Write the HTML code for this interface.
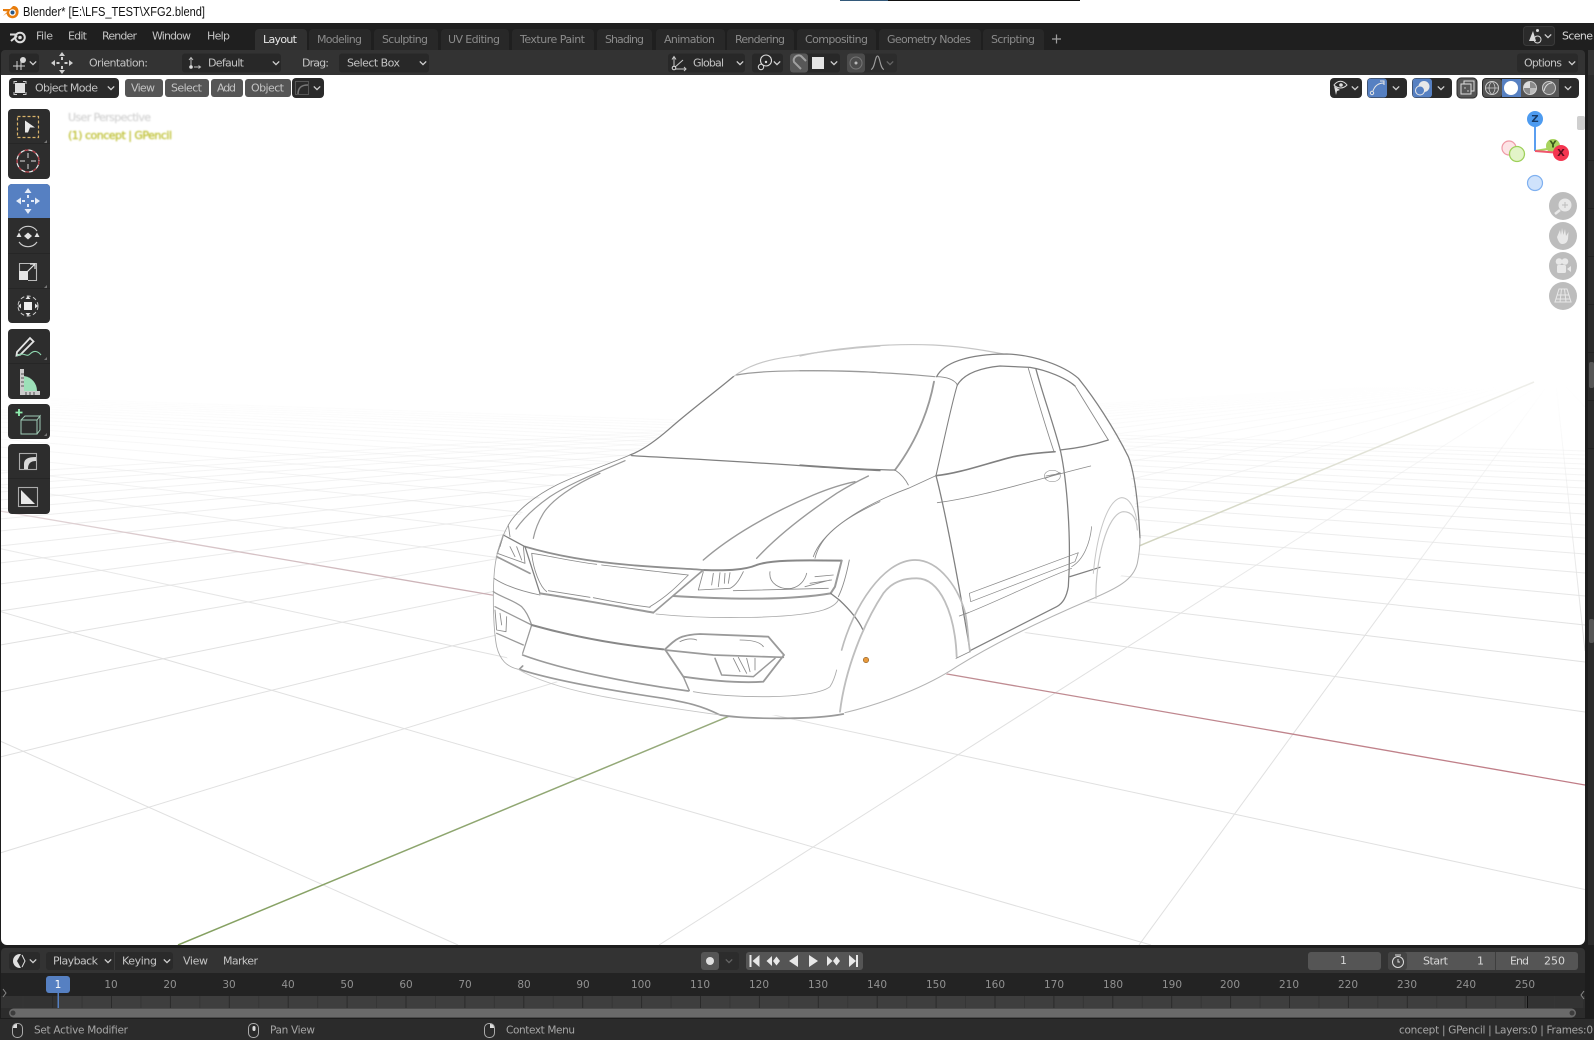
<!DOCTYPE html>
<html><head><meta charset="utf-8"><title>Blender</title>
<style>
html,body{margin:0;padding:0;background:#1d1d1d;width:1594px;height:1040px;overflow:hidden}
svg{display:block;overflow:hidden}
text{font-family:"DejaVu Sans","Liberation Sans",sans-serif;font-size:11px;fill:#c4c4c4;dominant-baseline:central}
.tab{fill:#8b8b8b}
.num{fill:#919191;text-anchor:middle;font-size:10.5px}
.w{fill:#d8d8d8}
.st{fill:#a6a6a6;font-size:10.5px}
.chev{fill:none;stroke:#cfcfcf;stroke-width:1.3}
.car path{fill:none;stroke-linecap:round;stroke-linejoin:round}
.d{stroke:#808080;stroke-width:3.8}
.m{stroke:#9a9a9a;stroke-width:4.2}
.f{stroke:#8a8a8a;stroke-width:2.6}
.l{stroke:#c6c6c6;stroke-width:3.5}
.g{stroke:#aaa;stroke-width:2.6}
</style></head><body>
<svg width="1594" height="1040" viewBox="0 0 1594 1040" xmlns="http://www.w3.org/2000/svg">
<defs>
<path id="c" class="chev" d="M-3.2 -1.6L0 1.6L3.2 -1.6"/>
<linearGradient id="gr" gradientUnits="userSpaceOnUse" x1="0" y1="385" x2="0" y2="640"><stop offset="0" stop-color="#e6e6e6" stop-opacity="0"/><stop offset=".45" stop-color="#e4e4e4" stop-opacity=".55"/><stop offset="1" stop-color="#e0e0e0"/></linearGradient>
<linearGradient id="rx" gradientUnits="userSpaceOnUse" x1="0" y1="0" x2="1585" y2="0"><stop offset="0" stop-color="#e2d6d8"/><stop offset=".31" stop-color="#c9aeb3"/><stop offset=".6" stop-color="#bf8d93"/><stop offset="1" stop-color="#c07c86"/></linearGradient>
<linearGradient id="gx" gradientUnits="userSpaceOnUse" x1="0" y1="945" x2="0" y2="382"><stop offset="0" stop-color="#84a060"/><stop offset=".41" stop-color="#98ab7e"/><stop offset=".7" stop-color="#cfd2bc"/><stop offset="1" stop-color="#eeeeea"/></linearGradient>
<pattern id="tk" patternUnits="userSpaceOnUse" x="111" y="996" width="58.9" height="14"><rect width="58.9" height="14" fill="none"/><path d="M0.5 0V14" stroke="#2a2a2a"/><path d="M29.95 0V14" stroke="#353535"/></pattern>
<clipPath id="vp"><path d="M1 75H1585V939a6 6 0 0 1-6 6H7a6 6 0 0 1-6-6Z"/></clipPath>
</defs>

<!-- title bar -->
<rect width="1594" height="23" fill="#fff"/>
<rect x="840" y="0" width="48" height="1" fill="#33597a"/><rect x="888" y="0" width="192" height="1" fill="#111"/>
<g transform="translate(11,12)"><path d="M-8 -3H-1L2 -6C6 -6.500 8 -3 7.500 1C7 5 3 7 0 6C-3 5.500 -4 3 -4.500 1.500L-8 4L-3.500 -0.500L-8 -1Z" fill="#e87d0d"/><circle cx="1.500" cy="0.500" r="3.300" fill="#fff"/><circle cx="1.500" cy="0.500" r="2" fill="#265787"/></g>
<text x="23" y="12" textLength="182" lengthAdjust="spacingAndGlyphs" style="font-family:'Liberation Sans',sans-serif;font-size:12.5px;fill:#111">Blender* [E:\LFS_TEST\XFG2.blend]</text>

<!-- top bar -->
<rect y="23" width="1594" height="27" fill="#1f1f1f"/>
<circle cx="20" cy="37.500" r="4.800" fill="none" stroke="#dcdcdc" stroke-width="2"/><circle cx="20" cy="37.500" r="1.800" fill="#dcdcdc"/>
<path d="M10 34.500H17.500M11 41L17 36" fill="none" stroke="#dcdcdc" stroke-width="2"/>
<text x="36" y="36" textLength="17">File</text><text x="68" y="36" textLength="19">Edit</text><text x="102" y="36" textLength="35">Render</text><text x="152" y="36" textLength="39">Window</text><text x="207" y="36" textLength="23">Help</text>
<path d="M255 50V33a4 4 0 0 1 4-4h44a4 4 0 0 1 4 4V50Z" fill="#303030"/>
<g fill="#282828">
<path d="M309 50V33a4 4 0 0 1 4-4h54a4 4 0 0 1 4 4V50Z"/><path d="M374 50V33a4 4 0 0 1 4-4h56a4 4 0 0 1 4 4V50Z"/><path d="M441 50V33a4 4 0 0 1 4-4h60a4 4 0 0 1 4 4V50Z"/><path d="M512 50V33a4 4 0 0 1 4-4h74a4 4 0 0 1 4 4V50Z"/><path d="M597 50V33a4 4 0 0 1 4-4h47a4 4 0 0 1 4 4V50Z"/><path d="M656 50V33a4 4 0 0 1 4-4h61a4 4 0 0 1 4 4V50Z"/><path d="M727 50V33a4 4 0 0 1 4-4h59a4 4 0 0 1 4 4V50Z"/><path d="M797 50V33a4 4 0 0 1 4-4h71a4 4 0 0 1 4 4V50Z"/><path d="M879 50V33a4 4 0 0 1 4-4h94a4 4 0 0 1 4 4V50Z"/><path d="M983 50V33a4 4 0 0 1 4-4h53a4 4 0 0 1 4 4V50Z"/>
</g>
<text x="263" y="39.500" textLength="34" style="fill:#e6e6e6">Layout</text>
<text class="tab" x="317" y="39.500" textLength="45">Modeling</text><text class="tab" x="382" y="39.500" textLength="46">Sculpting</text><text class="tab" x="448" y="39.500" textLength="52">UV Editing</text><text class="tab" x="520" y="39.500" textLength="65">Texture Paint</text><text class="tab" x="605" y="39.500" textLength="39">Shading</text><text class="tab" x="664" y="39.500" textLength="51">Animation</text><text class="tab" x="735" y="39.500" textLength="50">Rendering</text><text class="tab" x="805" y="39.500" textLength="63">Compositing</text><text class="tab" x="887" y="39.500" textLength="84">Geometry Nodes</text><text class="tab" x="991" y="39.500" textLength="44">Scripting</text>
<path d="M1052 39H1061M1056.500 34.500V43.500" stroke="#a0a0a0" stroke-width="1.200" fill="none"/>
<rect x="1523.500" y="26.500" width="31" height="19" rx="3" fill="#2a2a2a" stroke="#3a3a3a"/><path d="M1529 41L1533 31L1536 41Z" fill="#d8d8d8"/><circle cx="1537.500" cy="30.500" r="1.500" fill="#d8d8d8"/><circle cx="1537.500" cy="39.500" r="3.500" fill="none" stroke="#d8d8d8"/>
<use href="#c" x="1548" y="36"/>
<rect x="1555" y="26" width="39" height="20" fill="#1f1f1f"/>
<text x="1562" y="36" textLength="31" class="w">Scene</text>

<!-- tool settings -->
<path d="M1 75V54a4 4 0 0 1 4-4H1581a4 4 0 0 1 4 4V75Z" fill="#333"/>
<rect x="9" y="53.500" width="30" height="19" rx="3" fill="#282828"/>
<path d="M13 66H25M17 61V70M21 61V70" stroke="#d0d0d0" fill="none"/><circle cx="23" cy="60" r="3" fill="#d8d8d8"/><use href="#c" x="33" y="63"/>
<g fill="#cfcfcf"><path d="M62 52l3 4h-6zM62 74l3-4h-6zM51 63l4-3v6zM73 63l-4-3v6z"/><rect x="56.500" y="62" width="3" height="2"/><rect x="64.500" y="62" width="3" height="2"/><rect x="61" y="57" width="2" height="3"/><rect x="61" y="66" width="2" height="3"/></g>
<text x="89" y="63" textLength="59">Orientation:</text>
<rect x="182" y="53.500" width="99" height="19" rx="3" fill="#282828"/>
<path d="M191 66V58M189 60l2-2.500l2 2.500M194 67H200M198.500 65.500l2 1.500l-2 1.500" stroke="#bdbdbd" fill="none"/><circle cx="191" cy="67" r="1.800" fill="#e0e0e0"/>
<text x="208" y="63" textLength="36">Default</text><use href="#c" x="276" y="63"/>
<text x="302" y="63" textLength="27">Drag:</text>
<rect x="339" y="53.500" width="90" height="19" rx="3" fill="#282828"/><text x="347" y="63" textLength="53">Select Box</text><use href="#c" x="423" y="63"/>
<rect x="668" y="53.500" width="77" height="19" rx="3" fill="#282828"/>
<path d="M674 68V57M672 59.500l2-3l2 3M674 69H686M684 67l2 2l-2 2M674 68L683 60" stroke="#c8c8c8" fill="none"/><circle cx="674" cy="68" r="1.800" fill="#282828" stroke="#e0e0e0"/>
<text x="693" y="63" textLength="31">Global</text><use href="#c" x="740" y="63"/>
<rect x="752" y="53.500" width="31" height="19" rx="3" fill="#282828"/>
<circle cx="766" cy="60.500" r="5.500" fill="none" stroke="#dcdcdc" stroke-width="1.100"/><circle cx="761" cy="67" r="2.700" fill="#282828" stroke="#dcdcdc"/><circle cx="766" cy="62" r="1.200" fill="#dcdcdc"/><use href="#c" x="777" y="63"/>
<rect x="790" y="53.500" width="50" height="19" rx="3" fill="#282828"/><rect x="790" y="53.500" width="18" height="19" rx="3" fill="#585858"/>
<path d="M801 69L794 62A5 5 0 0 1 801 56L806 61" fill="none" stroke="#a0a0a0" stroke-width="2"/><path d="M802 66L797 61A2 2 0 0 1 800 59L804 64" fill="none" stroke="#585858" stroke-width=".8"/>
<rect x="812" y="57" width="12" height="12" fill="#e4e4e4"/><use href="#c" x="834" y="63"/>
<rect x="847" y="53.500" width="50" height="19" rx="3" fill="#2c2c2c"/><rect x="847" y="53.500" width="18" height="19" rx="3" fill="#4c4c4c"/>
<circle cx="856" cy="63" r="6" fill="none" stroke="#777"/><circle cx="856" cy="63" r="1.500" fill="#bbb"/>
<path d="M871 69.500C875 68.500 875 56 877.500 56C880 56 880 68.500 884 69.500" fill="none" stroke="#a0a0a0" stroke-width="1.100"/><use href="#c" x="890" y="63" opacity=".35"/>
<rect x="1517" y="53.500" width="61" height="19" rx="3" fill="#2a2a2a"/><text x="1524" y="63" textLength="38">Options</text><use href="#c" x="1572" y="63"/>

<!-- right sliver -->
<rect x="1588" y="50" width="6" height="895" fill="#2b2b2b"/>
<rect x="1588" y="50" width="6" height="25" fill="#333"/>
<g fill="#222"><rect x="1588" y="160" width="6" height="1"/><rect x="1588" y="208" width="6" height="1"/><rect x="1588" y="256" width="6" height="1"/><rect x="1588" y="304" width="6" height="1"/><rect x="1588" y="352" width="6" height="1"/><rect x="1588" y="400" width="6" height="1"/><rect x="1588" y="448" width="6" height="1"/></g>
<rect x="1589" y="362" width="5" height="26" rx="2" fill="#555"/><rect x="1589" y="619" width="5" height="24" rx="2" fill="#555"/>

<!-- viewport -->
<path d="M1 75H1585V939a6 6 0 0 1-6 6H7a6 6 0 0 1-6-6Z" fill="#fff"/>
<g clip-path="url(#vp)">
<g fill="none" stroke="url(#gr)" stroke-width="1">
<path d="M0 741L458 945M0 611.500L1151 945M0 548.600L1585 889.500M0 487L1585 712M0 470L1585 662M0 457L1585 625M0 447L1585 596M0 439L1585 573M0 432L1585 554M0 427L1585 538M0 422L1585 525M0 418L1585 514M0 415L1585 504M0 412L1585 495M0 409.500L1585 488M0 407L1585 481M0 405L1585 475M0 403L1585 469M0 401.500L1585 464M0 400L1585 459M0 398.600L1585 455M0 397L1585 451"/>
<path d="M0 853L1555 375M0 757L1555 375M0 692L1555 375M0 645L1555 375M0 611L1555 375M0 584L1555 375M0 563L1555 375M0 546L1555 375M0 531L1555 375M0 519L1555 375M0 509L1555 375M0 500L1555 375M0 492L1555 375M0 485L1555 375M0 479L1555 375M0 473L1555 375M659 945L1555 375M1139 945L1555 375M1555 375L1585 651M1555 375L1585 407"/>
</g>
<path d="M0 511L492 595M492 595L947 674L1585 785" stroke="url(#rx)" stroke-width="1.300" fill="none"/>
<path d="M178 945L1534 382" stroke="url(#gx)" stroke-width="1.500" fill="none"/>
</g>

<!-- car -->
<path fill="#fff" d="M733 377L790 357L900 344L1000 352L1078 378L1128 457L1140 538L1137 563L1093 598L957 667L927 687L883 703L845 714L720 716L613 700L518 669L497 647L493 597L508 525L560 480L630 455L670 430Z"/>
<g class="car">
<g transform="translate(480,330) scale(.33333)">
<path class="l" d="M760 140C800 110 850 90 930 80C1000 68 1100 55 1200 48"/>
<path class="m" d="M770 135C820 125 900 122 1000 122C1080 122 1150 124 1200 128" style="stroke-width:3.600"/>
<path class="d" d="M760 140C700 190 620 250 570 295C530 330 490 360 450 375"/>
<path class="f" d="M450 375C380 405 290 435 230 465C170 495 110 540 85 585"/>
<path class="m" d="M435 392C360 425 270 460 210 500C160 535 130 565 108 597" style="stroke-width:3.600"/>
<path class="m" d="M360 430C280 465 215 510 190 550C175 575 165 600 160 625" style="stroke-width:3.600"/>
<path class="d" d="M455 377C600 385 800 395 1000 410C1080 415 1150 420 1200 422"/>
<path class="m" d="M670 690C750 620 870 550 1000 495C1060 470 1100 460 1125 455"/>
<path class="m" d="M830 685C890 620 980 550 1070 490C1110 465 1140 450 1165 438"/>
<path class="f" d="M1005 685C1020 620 1080 570 1200 515"/>
<path class="m" d="M135 650C220 675 330 695 450 705C560 715 620 715 670 720" style="stroke-width:5.500;stroke:#8f8f8f"/>
<path class="m" d="M670 720C730 722 790 722 830 705C870 690 950 690 1085 692" style="stroke-width:6;stroke:#888"/>
<path class="m" d="M1085 692L1065 770L1052 790" style="stroke-width:6"/>
<path class="m" d="M580 798C700 805 900 815 1052 790" style="stroke-width:6"/>
<path class="d" d="M135 650L180 790"/>
<path class="f" d="M155 670C160 720 180 770 200 785M155 670C220 680 280 695 350 703M365 705C450 715 530 725 625 735M625 735C590 770 560 800 510 830M205 782L330 802M340 803C400 815 450 825 510 832"/>
<path class="m" d="M180 790C280 805 330 815 420 830C460 838 490 842 520 848" style="stroke-width:6"/>
<path class="m" d="M670 720L520 848" style="stroke-width:5"/>
<path class="f" d="M655 780L670 725M655 780L750 775C770 765 780 745 790 725M760 782L1045 775M870 725C865 760 900 780 935 775C960 770 975 750 980 730M975 770L1050 750M990 760L1055 750M1005 740L1060 735M700 730L695 765M720 728L715 770M735 730L733 760M750 728L745 760"/>
<path class="f" d="M85 585L90 620M70 615L60 650M52 670L135 700M90 650L105 680M110 650L125 690M130 650L135 700"/>
<path class="m" d="M50 680L150 730" style="stroke-width:5"/>
<path class="d" d="M70 615L135 650M70 615L52 670"/>
<path class="g" d="M85 585C60 630 45 680 42 740C38 800 40 900 50 950C60 990 80 1010 115 1018"/>
<path class="f" d="M42 745C80 770 130 785 180 795M45 840L50 900L78 905L80 860M60 850L65 885"/>
<path class="m" d="M40 785C60 800 100 810 125 830C140 845 150 870 155 885M45 830L155 885M50 910L130 945M155 885L128 970" style="stroke-width:3.800"/>
<path class="m" d="M155 885C280 920 420 945 550 958" style="stroke-width:6;stroke:#888"/>
<path class="m" d="M555 958C590 925 600 915 660 912L865 920L912 975L850 1055C780 1060 680 1050 610 1040L555 958Z" style="stroke-width:5.500"/>
<path class="m" d="M555 960L700 975L910 982" style="stroke-width:5"/>
<path class="m" d="M705 985L725 1035L820 1040L885 985" style="stroke-width:4.500"/>
<path class="f" d="M760 985L780 1025M775 982L800 1030M800 985L810 1025M825 985L825 1020M600 935C620 925 640 925 650 930M780 930C810 930 840 935 850 950"/>
<path class="m" d="M610 1040L628 1082"/>
<path class="m" d="M128 975C250 1020 450 1060 625 1083" style="stroke-width:5"/>
<path class="m" d="M118 1018L128 1008M118 1018C200 1045 350 1075 550 1105C620 1118 660 1125 720 1155C800 1168 1000 1170 1090 1152" style="stroke-width:5"/>
<path class="l" d="M115 1018C220 1080 400 1110 720 1155" style="stroke-width:2.500"/>
<path class="g" d="M640 1085C750 1105 1000 1110 1050 1070C1060 1055 1065 1040 1070 1020M528 852C700 870 950 865 1030 840C1060 830 1070 820 1075 810"/>
<path class="d" d="M1052 790L1078 810C1110 840 1135 870 1148 898"/>
<path class="f" d="M1108 690C1100 730 1090 770 1075 800"/>
</g>
<g transform="translate(800,330) scale(.33333)">
<path class="l" d="M0 78C120 50 280 40 400 45C470 48 550 60 610 72"/>
<path class="d" d="M410 140C430 100 500 72 620 72C700 75 790 105 835 145C880 200 940 290 985 380C1005 430 1015 530 1020 625"/>
<path class="m" d="M0 122C150 122 300 130 405 140" style="stroke-width:3.600"/>
<path class="f" d="M410 140C440 140 465 150 472 165"/>
<path class="d" d="M472 165C490 135 530 115 600 108L690 112C740 120 800 145 825 168"/>
<path class="d" d="M472 165C455 220 430 340 408 437" style="stroke-width:3.200"/>
<path class="m" d="M402 155C390 220 360 320 285 420" style="stroke-width:5.500"/>
<path class="d" d="M0 405C100 412 200 420 285 420"/>
<path class="f" d="M285 420C300 430 315 445 325 465"/>
<path class="d" d="M408 437C480 430 560 400 640 380C680 372 720 368 765 365" style="stroke-width:5"/>
<path class="d" d="M780 360C830 355 880 345 925 330"/>
<path class="f" d="M825 168L925 330M685 115C710 200 740 300 762 365"/>
<path class="d" d="M708 118C730 200 760 280 782 365C800 450 815 620 805 770C800 800 790 820 770 830L510 962"/>
<path class="d" d="M408 437C430 520 470 720 510 962"/>
<path class="f" d="M412 518C550 500 700 450 872 408"/>
<ellipse cx="757" cy="438" rx="24" ry="17" fill="none" stroke="#999" stroke-width="2"/>
<path class="f" d="M735 445L780 428M738 438L782 430"/>
<path class="f" d="M40 680C60 620 150 540 325 475L408 437"/>
<path class="l" d="M125 960C160 830 250 690 345 690C420 690 480 780 497 855C505 900 505 940 510 965" style="stroke-width:5;stroke:#bcbcbc"/>
<path class="l" d="M120 1145C135 1020 190 880 250 790C280 750 320 745 350 745C420 745 465 850 470 980" style="stroke-width:5.500;stroke:#bebebe"/>
<path class="f" d="M468 985L510 965M478 858L505 848"/>
<path class="l" d="M135 1148C250 1120 380 1070 470 1010C600 930 750 860 880 805C950 775 1000 750 1012 700C1020 660 1020 630 1020 625" style="stroke-width:3.200;stroke:#b4b4b4"/>
<path class="f" d="M505 848C600 810 710 755 815 715M508 790L835 668L825 695L512 815ZM815 710C850 690 870 640 875 590" style="stroke-width:2.200"/>
<path class="d" d="M810 740L900 712"/>
<path class="l" d="M888 805C885 700 920 550 970 545C1000 545 1010 570 1012 600"/>
<path class="l" d="M880 730C890 620 920 510 965 503C990 503 1005 540 1010 570" style="stroke-width:3"/>
</g>
</g>
<circle cx="866" cy="660" r="2.700" fill="#e89a3c" stroke="#8a5a20" stroke-width=".6"/>

<!-- viewport header -->
<rect x="9" y="78" width="110" height="20" rx="4" fill="#2a2a2a"/>
<rect x="15" y="83" width="10" height="10" fill="#e0e0e0"/><path d="M14 84V81.500H17M26 84V81.500H23M14 92V94.500H17M26 92V94.500H23" fill="none" stroke="#ccc"/>
<text x="35" y="88" textLength="63">Object Mode</text><use href="#c" x="111" y="88"/>
<g fill="#555"><rect x="125" y="79" width="38" height="18" rx="3"/><rect x="165" y="79" width="44" height="18" rx="3"/><rect x="211" y="79" width="32" height="18" rx="3"/><rect x="245" y="79" width="46" height="18" rx="3"/></g>
<text x="131" y="88" textLength="24">View</text><text x="171" y="88" textLength="31">Select</text><text x="217" y="88" textLength="19">Add</text><text x="251" y="88" textLength="33">Object</text>
<rect x="292" y="78" width="32" height="20" rx="4" fill="#2a2a2a"/><rect x="295.500" y="81.500" width="13" height="13" fill="none" stroke="#555"/><path d="M298 94C298 87 302 85 308 85" fill="none" stroke="#777" stroke-width="1.500"/><use href="#c" x="317" y="88"/>

<!-- overlay text -->
<text x="68" y="117.500" textLength="83" style="fill:#cfcfcf;stroke:#dedede;stroke-width:.4;filter:blur(.7px)">User Perspective</text>
<text x="68" y="135.500" textLength="104" style="fill:#c0c23e;stroke:#c6c84a;stroke-width:.4;filter:blur(.7px)">(1) concept | GPencil</text>

<!-- right viewport header -->
<rect x="1330" y="78" width="32" height="20" rx="4" fill="#2a2a2a"/><path d="M1334 85C1338 80 1343 80 1347 85C1343 89 1338 89 1334 85Z" fill="none" stroke="#ddd"/><circle cx="1341" cy="85" r="1.800" fill="#ddd"/><path d="M1334 86L1340 90L1337 91L1336 95Z" fill="#ddd"/><use href="#c" x="1355" y="88"/>
<rect x="1367" y="78" width="40" height="20" rx="4" fill="#2a2a2a"/><rect x="1367.500" y="78.500" width="19.500" height="19" rx="3" fill="#5680c2"/><circle cx="1372" cy="93" r="1.700" fill="none" stroke="#e6e6e6"/><path d="M1373 91C1375 85 1379 83 1384 83M1380 81L1384 81V85" fill="none" stroke="#e6e6e6"/><use href="#c" x="1396" y="88"/>
<rect x="1412" y="78" width="40" height="20" rx="4" fill="#2a2a2a"/><rect x="1412.500" y="78.500" width="19.500" height="19" rx="3" fill="#5680c2"/><circle cx="1424" cy="86.500" r="5.500" fill="#e8e8e8"/><circle cx="1420" cy="90.500" r="4.500" fill="#5680c2" stroke="#e8e8e8"/><use href="#c" x="1441" y="88"/>
<rect x="1457" y="78" width="20" height="20" rx="4" fill="#555" stroke="#2a2a2a"/><rect x="1461" y="84" width="10" height="10" fill="none" stroke="#ddd"/><path d="M1464 84V81H1474V91H1471" fill="none" stroke="#ddd"/><circle cx="1465" cy="88" r=".7" fill="#ddd"/><circle cx="1468" cy="91" r=".7" fill="#ddd"/>
<rect x="1482" y="78" width="97" height="20" rx="4" fill="#2a2a2a"/>
<rect x="1483" y="79" width="19" height="18" rx="3" fill="#555"/><rect x="1502" y="79" width="19" height="18" fill="#5680c2"/><rect x="1521" y="79" width="19" height="18" fill="#555"/><rect x="1540" y="79" width="19" height="18" fill="#555"/>
<circle cx="1492" cy="88" r="6.500" fill="none" stroke="#ccc"/><path d="M1485.500 88H1498.500M1492 81.500C1488 85 1488 91 1492 94.500M1492 81.500C1496 85 1496 91 1492 94.500" fill="none" stroke="#ccc" stroke-width=".8"/>
<circle cx="1511" cy="88" r="7" fill="#fff"/>
<circle cx="1530" cy="88" r="6.500" fill="#8a8a8a" stroke="#ccc"/><path d="M1530 88V81.500A6.500 6.500 0 0 0 1523.500 88Z" fill="#ddd"/><path d="M1530 88H1536.500A6.500 6.500 0 0 1 1530 94.500Z" fill="#ddd" opacity=".6"/>
<circle cx="1549" cy="88" r="6.500" fill="#777" stroke="#ccc"/><path d="M1544 91C1545 86 1548 83 1552 83" fill="none" stroke="#ddd"/>
<use href="#c" x="1568" y="88"/>

<!-- gizmo -->
<circle cx="1509" cy="148" r="7" fill="#fde4e6" stroke="#ef9aa6" stroke-width="1.200"/>
<circle cx="1553" cy="146" r="7" fill="#a8d45e"/>
<circle cx="1517" cy="154" r="7.500" fill="#e3f4c8" stroke="#9ed05a" stroke-width="1.300"/>
<circle cx="1535" cy="183" r="7.500" fill="#cfe2fb" stroke="#7fb0f0" stroke-width="1.200"/>
<path d="M1535 119V151" stroke="#5a9ef0" stroke-width="2"/>
<path d="M1535 151L1553 148" stroke="#a8d45e" stroke-width="2"/>
<path d="M1535 151L1561 153" stroke="#f0566e" stroke-width="2"/>
<circle cx="1535" cy="119" r="8" fill="#4d9bf0"/>
<circle cx="1561" cy="153" r="8" fill="#f4354f"/>
<text x="1535" y="119.500" text-anchor="middle" style="fill:#173a66;font-size:10px;font-weight:bold">Z</text>
<text x="1553" y="145" text-anchor="middle" style="fill:#3c5a1c;font-size:10px;font-weight:bold">Y</text>
<text x="1561" y="153.500" text-anchor="middle" style="fill:#5a0d1c;font-size:10px;font-weight:bold">X</text>
<rect x="1577" y="116" width="8" height="14" rx="2" fill="#cfcfcf"/>
<!-- nav buttons -->
<g fill="#bdbdbd"><circle cx="1563" cy="206" r="14"/><circle cx="1563" cy="236" r="14"/><circle cx="1563" cy="266" r="14"/><circle cx="1563" cy="296" r="14"/></g>
<g transform="translate(1563,206)"><circle cx="2" cy="-1" r="6.500" fill="#e8e8e8"/><path d="M-3 4L-8 8" stroke="#e8e8e8" stroke-width="2.500"/><path d="M-1 -1H5M2 -4V2" stroke="#bdbdbd"/></g>
<g transform="translate(1563,236)" fill="#e8e8e8"><path d="M-6 1L-3 -6L-2 -1L-1 -8L0.500 -1L2 -7L3 0L5.500 -4L5 3C4 7 2 8 -1 8C-3 8 -5 5 -6 1Z"/></g>
<g transform="translate(1563,266)" fill="#e8e8e8"><circle cx="-4" cy="-4.500" r="3.300"/><circle cx="2" cy="-4.500" r="3.300"/><rect x="-6" y="-1" width="9" height="8" rx="1.500"/><path d="M4 3L8 0V6Z"/></g>
<g transform="translate(1563,296)" fill="none" stroke="#e8e8e8"><path d="M-4 -7H4L8 6H-8ZM-6 -1H6M-7 3H7M-1.500 -7L-3 6M1.500 -7L3 6"/></g>

<!-- toolbar -->
<g fill="#2d2d2d"><rect x="8" y="109" width="42" height="70" rx="4"/><rect x="8" y="184" width="42" height="139" rx="4"/><rect x="8" y="329" width="42" height="70" rx="4"/><rect x="8" y="404" width="42" height="35" rx="4"/><rect x="8" y="444" width="42" height="70" rx="4"/></g>
<path d="M8 218V188a4 4 0 0 1 4-4H46a4 4 0 0 1 4 4V218Z" fill="#5680c2"/>
<g stroke="#262626"><path d="M8 143.500H50M8 253.500H50M8 288.500H50M8 363.500H50M8 478.500H50"/></g>
<!-- select -->
<rect x="17.500" y="116.500" width="21" height="21" fill="none" stroke="#d9b36a" stroke-width="1.200" stroke-dasharray="3 2"/>
<path d="M25 120.500L35 127.500H30L28 132.500H25Z" fill="#e8e8e8"/>
<path d="M47 140L47 143L44 143Z" fill="#777"/>
<!-- cursor -->
<circle cx="28" cy="161" r="11" fill="none" stroke="#e8e8e8" stroke-width="1.200"/><circle cx="28" cy="161" r="11" fill="none" stroke="#b0343f" stroke-width="1.200" stroke-dasharray="4 4"/>
<path d="M28 153V158M28 164V169M20 161H25M31 161H36" stroke="#bbb" stroke-width="1.200"/>
<!-- move -->
<g fill="#e4ecf8"><path d="M28 188l3.500 5h-7zM28 214l3.500-5h-7zM16 201l5-3.500v7zM40 201l-5-3.500v7z"/><rect x="27" y="195" width="2" height="3"/><rect x="27" y="204" width="2" height="3"/><rect x="22" y="200" width="3" height="2"/><rect x="31" y="200" width="3" height="2"/></g>
<!-- rotate -->
<path d="M19 231A11 11 0 0 1 37 231M19 242A11 11 0 0 0 37 242" fill="none" stroke="#ccc" stroke-width="1.100"/><path d="M28 232.500l4 3.500l-4 3.500l-4-3.500z" fill="#e4e4e4"/><path d="M16.500 237l2.500-4.500l2.500 4.500zM34.500 237l2.500-4.500l2.500 4.500z" fill="#e4e4e4"/>
<!-- scale -->
<path d="M19.500 271V263.500H36.500V280.500H28" fill="none" stroke="#bbb" stroke-width="1.100"/><rect x="19" y="271" width="9" height="9" fill="#e4e4e4"/><path d="M27 272L35 264M30 264H35V269" fill="none" stroke="#e4e4e4" stroke-width="1.200"/>
<path d="M47 285V288H44Z" fill="#777"/>
<!-- transform -->
<circle cx="28" cy="306" r="10" fill="none" stroke="#ccc" stroke-width="1" stroke-dasharray="4 2.500"/><rect x="24" y="302" width="8" height="8" fill="#eee"/><path d="M28 296l2.500 3h-5zM28 316l2.500-3h-5zM18 306l3-2.500v5zM38 306l-3-2.500v5z" fill="#e4e4e4"/>
<!-- annotate -->
<path d="M17 352L30 338L33.500 341.500L20.500 354.500L16.500 355.500Z" fill="none" stroke="#e4e4e4" stroke-width="1.800"/>
<path d="M17 356C24 351 26 358 30 354C34 350 38 351 41 355" fill="none" stroke="#8fd8b0" stroke-width="1.100"/>
<path d="M47 357V360H44Z" fill="#777"/>
<!-- measure -->
<path d="M24 391V376A15 15 0 0 1 37 391Z" fill="#9ce0b8"/>
<path d="M20 369H24V391H40V395H20Z" fill="#ccc"/><path d="M21 374H24M21 378H24M21 382H24M21 386H24M26 392V395M30 392V395M34 392V395" stroke="#2d2d2d" stroke-width=".8"/>
<!-- add cube -->
<path d="M21 420L25 416H40L37 420V434H21ZM21 420H37M37 420L40 416V430L37 434" fill="none" stroke="#a0ccb6" stroke-width="1"/>
<path d="M19 409V416M15.500 412.500H22.500" stroke="#8ff0b0" stroke-width="1.800"/>
<path d="M47 433V436H44Z" fill="#777"/>
<!-- extrude -->
<rect x="19.500" y="453.500" width="17" height="16" fill="none" stroke="#aaa" stroke-width="1.100"/><path d="M24 469V464C24 459 28 457 36 457V461C31 461 28 463 28 469Z" fill="#d8d8d8"/>
<!-- bottom icon -->
<rect x="18.500" y="487.500" width="19" height="19" fill="none" stroke="#aaa" stroke-width="1.100"/><path d="M21 490L35 504H21Z" fill="#e8e8e8"/>

<!-- timeline -->
<path d="M1 972V952a4 4 0 0 1 4-4H1581a4 4 0 0 1 4 4V1012a4 4 0 0 1-4 4H5a4 4 0 0 1-4-4Z" fill="#333"/>
<rect x="1" y="973" width="1584" height="23" fill="#232323"/>
<rect x="1" y="996" width="1584" height="12" fill="#3e3e3e"/>
<rect x="1" y="996" width="57" height="12" fill="#333"/><rect x="1527" y="996" width="58" height="12" fill="#333"/>
<rect x="1" y="996" width="1584" height="12" fill="url(#tk)"/>
<rect x="1" y="1008" width="1584" height="10" fill="#2c2c2c"/>
<rect x="9" y="1008.500" width="1567" height="9" rx="4.500" fill="#6a6a6a"/>
<circle cx="13" cy="1013" r="2.500" fill="#3c3c3c"/><circle cx="1572" cy="1013" r="2.500" fill="#3c3c3c"/>
<rect x="1527" y="996" width="1" height="12" fill="#111"/>
<rect x="57.500" y="990" width="1.500" height="18" fill="#5680c2"/>
<rect x="46" y="976" width="24" height="17" rx="3" fill="#5680c2"/>
<text x="58" y="985" text-anchor="middle" style="fill:#fff;font-size:10.5px">1</text>
<path d="M3 989L6 993L3 997" fill="none" stroke="#888"/><path d="M1584 991L1581 995L1584 999" fill="none" stroke="#888"/>
<g>
<text class="num" x="111" y="985">10</text><text class="num" x="170" y="985">20</text><text class="num" x="229" y="985">30</text><text class="num" x="288" y="985">40</text><text class="num" x="347" y="985">50</text><text class="num" x="406" y="985">60</text><text class="num" x="465" y="985">70</text><text class="num" x="524" y="985">80</text><text class="num" x="583" y="985">90</text><text class="num" x="641" y="985">100</text><text class="num" x="700" y="985">110</text><text class="num" x="759" y="985">120</text><text class="num" x="818" y="985">130</text><text class="num" x="877" y="985">140</text><text class="num" x="936" y="985">150</text><text class="num" x="995" y="985">160</text><text class="num" x="1054" y="985">170</text><text class="num" x="1113" y="985">180</text><text class="num" x="1172" y="985">190</text><text class="num" x="1230" y="985">200</text><text class="num" x="1289" y="985">210</text><text class="num" x="1348" y="985">220</text><text class="num" x="1407" y="985">230</text><text class="num" x="1466" y="985">240</text><text class="num" x="1525" y="985">250</text>
</g>
<rect x="9" y="952" width="31" height="18" rx="3" fill="#2a2a2a"/>
<circle cx="20" cy="961" r="7" fill="#e0e0e0"/><path d="M21 954A7 7 0 0 1 21 968L17 961Z" fill="#2a2a2a"/><path d="M22 955L25 961L22 967" fill="none" stroke="#e0e0e0"/><use href="#c" x="33" y="961"/>
<rect x="46" y="952" width="127" height="18" rx="3" fill="#2a2a2a"/><rect x="114" y="952" width="1" height="18" fill="#3a3a3a"/>
<text x="53" y="961" textLength="45">Playback</text><use href="#c" x="108" y="961"/>
<text x="122" y="961" textLength="35">Keying</text><use href="#c" x="167" y="961"/>
<text x="183" y="961" textLength="25">View</text><text x="223" y="961" textLength="35">Marker</text>
<rect x="701" y="952" width="38" height="18" rx="3" fill="#2c2c2c"/><rect x="701" y="952" width="18" height="18" rx="3" fill="#555"/><circle cx="710" cy="961" r="4" fill="#e0e0e0"/><use href="#c" x="729" y="961" opacity=".35"/>
<rect x="746" y="952" width="117" height="18" rx="3" fill="#555"/>
<g fill="#e8e8e8">
<path d="M749.500 955h2v12h-2zM759.500 955v12l-7-6z"/>
<path d="M772 956v10l-5.500-5zM773 961l3.500-4.500l3.500 4.500l-3.500 4.500z"/>
<path d="M798 955v12l-9-6z"/>
<path d="M809 955v12l9-6z"/>
<path d="M827 956v10l5.500-5zM833 961l3.500-4.500l3.500 4.500l-3.500 4.500z"/>
<path d="M849 955v12l7-6zM856 955h2v12h-2z"/>
</g>
<rect x="1308" y="952" width="73" height="18" rx="3" fill="#555"/><text x="1343.500" y="961" text-anchor="middle" class="w" style="font-size:10.500px">1</text>
<rect x="1388" y="952" width="190" height="18" rx="3" fill="#555"/><rect x="1388" y="952" width="19" height="18" rx="3" fill="#444"/>
<circle cx="1398" cy="962" r="5.500" fill="none" stroke="#ddd"/><path d="M1395 955H1401M1398 959V962H1400" fill="none" stroke="#ddd"/>
<rect x="1495" y="952" width="1" height="18" fill="#3e3e3e"/>
<text x="1423" y="961" textLength="25" class="w">Start</text><text x="1477" y="961" class="w">1</text>
<text x="1510" y="961" textLength="19" class="w">End</text><text x="1544" y="961" textLength="21" class="w">250</text>

<!-- status bar -->
<rect y="1019" width="1594" height="21" fill="#2b2b2b"/>
<g fill="none" stroke="#aaa"><rect x="12.500" y="1023.500" width="10" height="14" rx="4.500"/><rect x="248.500" y="1023.500" width="10" height="14" rx="4.500"/><rect x="484.500" y="1023.500" width="10" height="14" rx="4.500"/></g>
<path d="M13 1028C13 1025 15 1024 17 1024V1028Z" fill="#ddd"/>
<rect x="252.500" y="1026" width="3" height="5" rx="1.500" fill="#ddd"/>
<path d="M490 1024C492 1024 494 1025 494 1028H490Z" fill="#ddd"/>
<text class="st" x="34" y="1030.500" textLength="94">Set Active Modifier</text>
<text class="st" x="270" y="1030.500" textLength="45">Pan View</text>
<text class="st" x="506" y="1030.500" textLength="69">Context Menu</text>
<text class="st" x="1399" y="1030.500" textLength="194">concept | GPencil | Layers:0 | Frames:0</text>
</svg>
</body></html>
